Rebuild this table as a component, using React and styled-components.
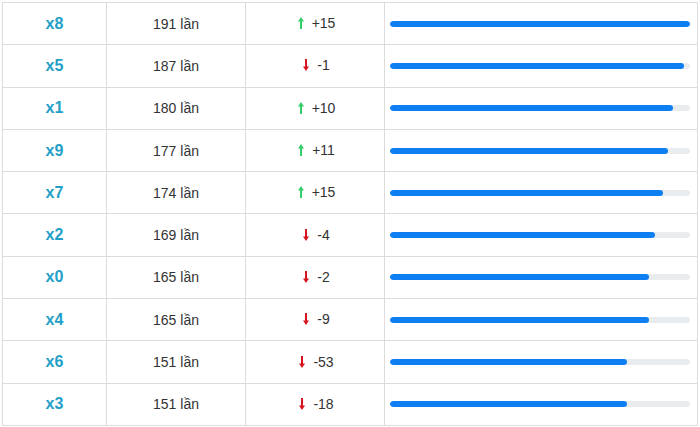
import React from "react";
import styled, { createGlobalStyle } from "styled-components";

const Global = createGlobalStyle`
  body {
    margin: 0;
    background: #fff;
    font-family: "Liberation Sans", Arial, sans-serif;
  }
`;

const Page = styled.div`
  padding: 2px 0 0 2px;
`;

const Table = styled.table`
  width: 696px;
  border-collapse: collapse;
  table-layout: fixed;
`;

const Row = styled.tr`
  height: 42.3px;
`;

const Cell = styled.td`
  width: ${(p) => p.$w}px;
  border: 1px solid #dcdcdc;
  text-align: center;
  vertical-align: middle;
  font-size: 14px;
  color: #333;
  padding: 0;
`;

const Num = styled.span`
  font-size: 16px;
  font-weight: bold;
  color: #239fc7;
`;

const Change = styled.span`
  display: inline-flex;
  align-items: center;
  gap: 8px;
  margin-left: 3px;
`;

const BarCell = styled(Cell)`
  padding: 0 7px 0 5px;
`;

const Track = styled.div`
  height: 6px;
  border-radius: 3px;
  background: #e9ecef;
  overflow: hidden;
`;

const Fill = styled.div`
  height: 100%;
  border-radius: 3px;
  background: #0d7ff2;
`;

function Arrow({ up }) {
  const color = up ? "#35cc6a" : "#d7141f";
  return (
    <svg width="6" height="12" viewBox="0 0 6 12">
      {up ? (
        <>
          <path d="M3 0 L6 4.5 L0 4.5 Z" fill={color} />
          <rect x="2" y="4" width="2" height="8" fill={color} />
        </>
      ) : (
        <>
          <rect x="2" y="0" width="2" height="8" fill={color} />
          <path d="M0 7.5 L6 7.5 L3 12 Z" fill={color} />
        </>
      )}
    </svg>
  );
}

const data = [
  ["x8", 191, 15],
  ["x5", 187, -1],
  ["x1", 180, 10],
  ["x9", 177, 11],
  ["x7", 174, 15],
  ["x2", 169, -4],
  ["x0", 165, -2],
  ["x4", 165, -9],
  ["x6", 151, -53],
  ["x3", 151, -18],
];

const max = 191;

export default function App() {
  return (
    <Page>
      <Global />
      <Table>
        <tbody>
          {data.map(([label, count, diff]) => (
            <Row key={label}>
              <Cell $w={103}>
                <Num>{label}</Num>
              </Cell>
              <Cell $w={138}>{count} lần</Cell>
              <Cell $w={138}>
                <Change>
                  <Arrow up={diff > 0} />
                  {diff > 0 ? `+${diff}` : diff}
                </Change>
              </Cell>
              <BarCell $w={300}>
                <Track>
                  <Fill style={{ width: `${(count / max) * 100}%` }} />
                </Track>
              </BarCell>
            </Row>
          ))}
        </tbody>
      </Table>
    </Page>
  );
}
